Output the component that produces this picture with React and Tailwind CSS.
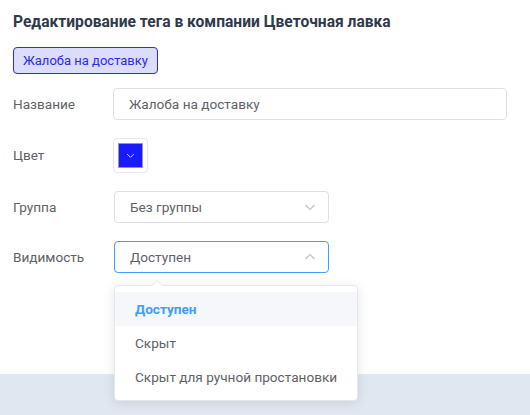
import React from "react";

const Chevron = ({ up = false, className = "" }) => (
  <svg width="12" height="12" viewBox="0 0 12 12" className={className}>
    <path
      d={up ? "M1.5 8 L6 3.5 L10.5 8" : "M1.5 4 L6 8.5 L10.5 4"}
      fill="none"
      stroke="currentColor"
      strokeWidth="1.1"
    />
  </svg>
);

export default function App() {
  return (
    <div
      className="relative w-[530px] h-[415px] bg-white overflow-hidden flex flex-col whitespace-nowrap"
      style={{ fontFamily: 'Roboto, "Noto Sans", Arial, sans-serif' }}
    >
      <div className="flex-1 px-[13px] pt-[12px]">
        <h1 className="text-[15.6px] leading-[20px] font-bold text-[#303a4b]">
          Редактирование тега в компании Цветочная лавка
        </h1>
        <div className="mt-[15px] inline-flex items-center h-[27px] px-[9px] rounded-[4px] border border-[#2b2bf0] bg-[#dcdcff] text-[13px] text-[#2b2bf0]">
          Жалоба на доставку
        </div>

        <div className="mt-[14px] flex flex-col gap-[18px] text-[13.6px]">
          <div className="flex items-center">
            <div className="w-[100px] text-[#606266]">Название</div>
            <div className="w-[394px] h-[32px] rounded-[4px] border border-[#dcdfe6] px-[15px] flex items-center text-[#606266]">
              Жалоба на доставку
            </div>
          </div>

          <div className="flex items-center">
            <div className="w-[100px] text-[#606266]">Цвет</div>
            <div className="w-[35px] h-[35px] rounded-[4px] border border-[#e4e7ed] p-[4px]">
              <div className="w-full h-full border border-[#999] bg-[#1a1aff] flex items-center justify-center text-white">
                <Chevron className="w-[9px] h-[9px]" />
              </div>
            </div>
          </div>

          <div className="flex items-center">
            <div className="w-[101px] text-[#606266]">Группа</div>
            <div className="w-[215px] h-[32px] rounded-[4px] border border-[#dcdfe6] pl-[15px] pr-[12px] flex items-center justify-between text-[#606266]">
              <span>Без группы</span>
              <Chevron className="text-[#c0c4cc]" />
            </div>
          </div>

          <div className="flex items-center">
            <div className="w-[101px] text-[#606266]">Видимость</div>
            <div className="w-[215px] h-[32px] rounded-[4px] border border-[#409eff] pl-[15px] pr-[12px] flex items-center justify-between text-[#606266]">
              <span>Доступен</span>
              <Chevron up className="text-[#c0c4cc]" />
            </div>
          </div>
        </div>
      </div>

      <div className="h-[41px] bg-[#dfe7f0] border-t border-[#e4eaf1]" />

      <div className="absolute left-[114px] top-[285px] w-[244px] rounded-[4px] border border-[#e4e7ed] bg-white shadow-[0_2px_12px_0_rgba(0,0,0,0.1)] py-[6px] text-[13.6px]">
        <div className="absolute -top-[6px] left-[36px] w-0 h-0 border-l-[6px] border-r-[6px] border-b-[6px] border-l-transparent border-r-transparent border-b-[#e4e7ed]" />
        <div className="absolute -top-[5px] left-[37px] w-0 h-0 border-l-[5px] border-r-[5px] border-b-[5px] border-l-transparent border-r-transparent border-b-white" />
        <div className="h-[34px] px-[20px] flex items-center bg-[#f5f7fa] font-bold text-[#409eff]">
          Доступен
        </div>
        <div className="h-[34px] px-[20px] flex items-center text-[#606266]">
          Скрыт
        </div>
        <div className="h-[34px] px-[20px] flex items-center text-[#606266]">
          Скрыт для ручной простановки
        </div>
      </div>
    </div>
  );
}
